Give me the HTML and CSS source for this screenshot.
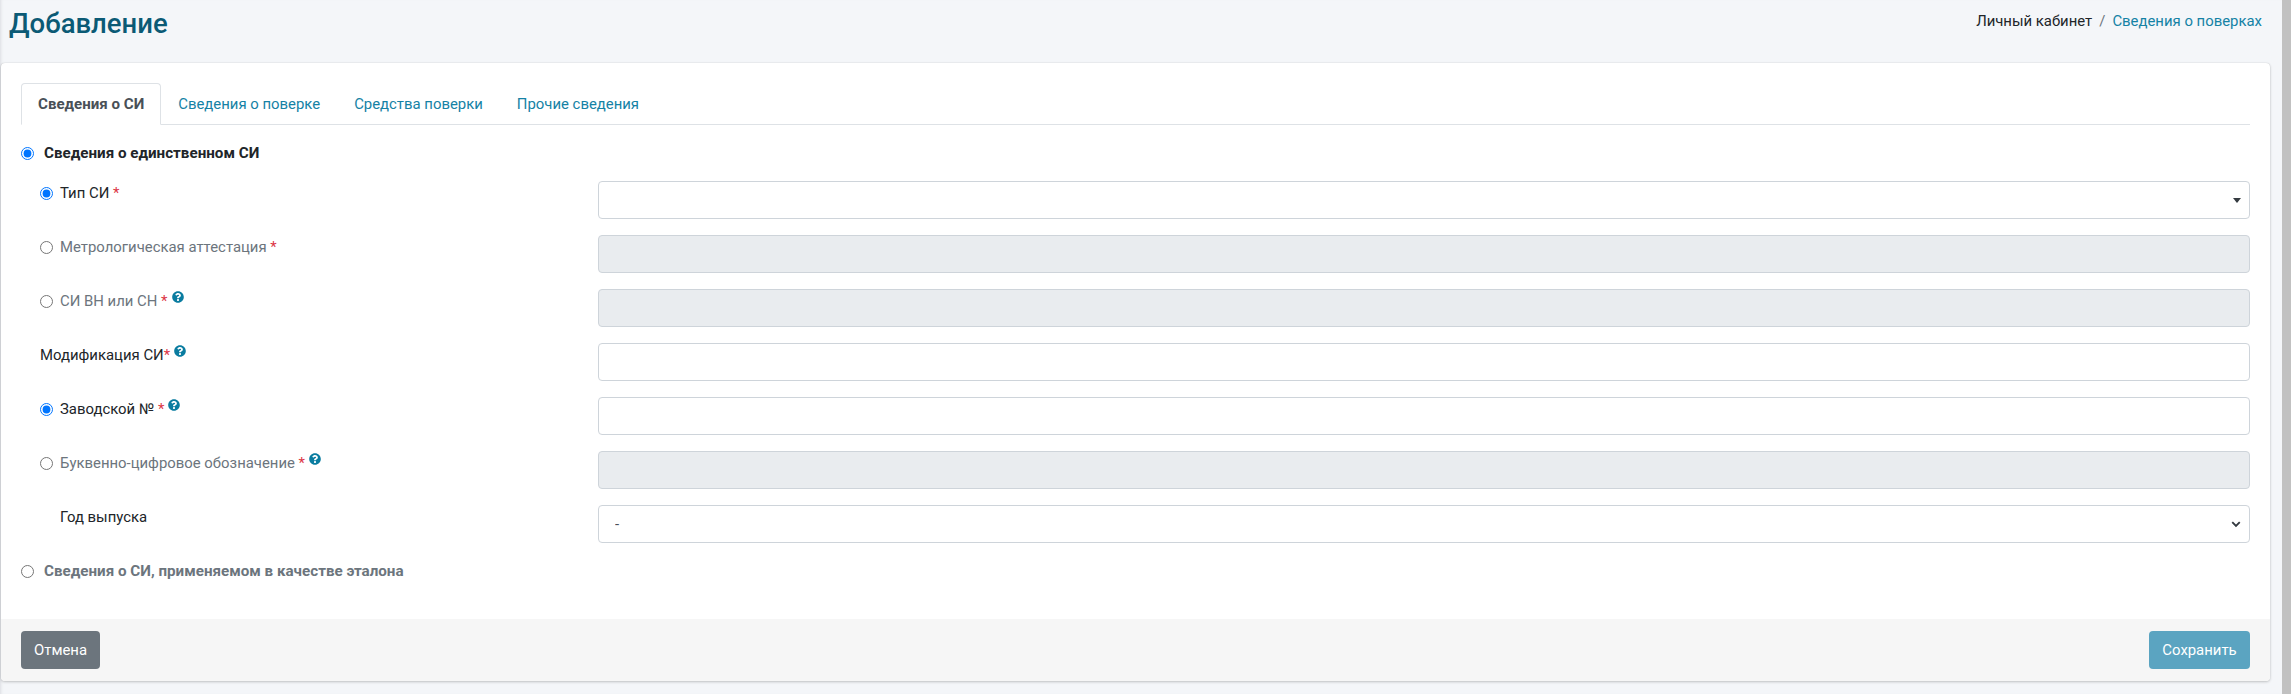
FILE: index.html
```html
<!DOCTYPE html>
<html lang="ru">
<head>
  <meta charset="UTF-8">
  <title>Добавление</title>
  <link rel="stylesheet" href="styles.css">
</head>
<body>
  <svg class="icon-defs" width="0" height="0">
    <symbol id="help" viewBox="0 0 512 512">
      <path d="M504 256c0 136.997-111.043 248-248 248S8 392.997 8 256C8 119.083 119.043 8 256 8s248 111.083 248 248zM262.655 90c-54.497 0-89.255 22.957-116.549 63.758-3.536 5.286-2.353 12.415 2.715 16.258l34.699 26.31c5.205 3.947 12.621 3.008 16.665-2.122 17.864-22.658 30.113-35.797 57.303-35.797 20.429 0 45.698 13.148 45.698 32.958 0 14.976-12.363 22.667-32.534 33.976C247.128 238.528 216 254.941 216 296v4c0 6.627 5.373 12 12 12h56c6.627 0 12-5.373 12-12v-1.333c0-28.462 83.186-29.647 83.186-106.667 0-58.002-60.165-102-116.531-102zM256 338c-25.365 0-46 20.635-46 46 0 25.364 20.635 46 46 46s46-20.636 46-46c0-25.365-20.635-46-46-46z"/>
    </symbol>
  </svg>

  <div class="page">
    <main class="content">
      <header class="page-header">
        <h1>Добавление</h1>
        <nav class="breadcrumb">
          <span>Личный кабинет</span>
          <span class="sep">/</span>
          <a href="#">Сведения о поверках</a>
        </nav>
      </header>

      <form class="card">
        <div class="card-body">
          <ul class="tabs">
            <li class="active"><a href="#">Сведения о СИ</a></li>
            <li><a href="#">Сведения о поверке</a></li>
            <li><a href="#">Средства поверки</a></li>
            <li><a href="#">Прочие сведения</a></li>
          </ul>

          <label class="section-radio">
            <input type="radio" name="section" checked>
            <span>Сведения о единственном СИ</span>
          </label>

          <div class="rows">
            <div class="row">
              <label class="row-label"><input type="radio" name="kind" checked><span>Тип СИ <i>*</i></span></label>
              <div class="fake-select"><b class="caret"></b></div>
            </div>
            <div class="row">
              <label class="row-label muted"><input type="radio" name="kind"><span>Метрологическая аттестация <i>*</i></span></label>
              <input class="field" type="text" disabled>
            </div>
            <div class="row">
              <label class="row-label muted"><input type="radio" name="kind"><span>СИ ВН или СН <i>*</i></span><svg class="help"><use href="#help"/></svg></label>
              <input class="field" type="text" disabled>
            </div>
            <div class="row">
              <label class="row-label"><span>Модификация СИ<i>*</i></span><svg class="help"><use href="#help"/></svg></label>
              <input class="field" type="text">
            </div>
            <div class="row">
              <label class="row-label"><input type="radio" name="serial" checked><span>Заводской № <i>*</i></span><svg class="help"><use href="#help"/></svg></label>
              <input class="field" type="text">
            </div>
            <div class="row">
              <label class="row-label muted"><input type="radio" name="serial"><span>Буквенно-цифровое обозначение <i>*</i></span><svg class="help"><use href="#help"/></svg></label>
              <input class="field" type="text" disabled>
            </div>
            <div class="row">
              <label class="row-label indented"><span>Год выпуска</span></label>
              <select class="field year"><option>-</option></select>
            </div>
          </div>

          <label class="section-radio muted">
            <input type="radio" name="section">
            <span>Сведения о СИ, применяемом в качестве эталона</span>
          </label>
        </div>

        <footer class="card-footer">
          <button type="button" class="btn btn-cancel">Отмена</button>
          <button type="button" class="btn btn-save">Сохранить</button>
        </footer>
      </form>
    </main>
    <div class="scrollbar"></div>
  </div>
</body>
</html>
```

FILE: styles.css
```css
* {
  box-sizing: border-box;
}

html, body {
  height: 100%;
}

body {
  margin: 0;
  background: #f4f6f9;
  color: #212529;
  font-family: "Roboto", "Noto Sans", sans-serif;
  font-size: 14.9px;
  overflow: hidden;
}

.icon-defs {
  display: block;
  height: 0;
}

.page {
  display: flex;
  height: 694px;
}

.content {
  flex: 1;
  padding: 0 12px 0 1px;
  box-shadow: inset 3px 0 3px -2px #dcdee2;
}

.scrollbar {
  width: 9px;
  background: #c1c1c1;
}

.page-header {
  display: flex;
  justify-content: space-between;
  height: 63px;
  padding: 0 8px;
}

.page-header h1 {
  margin: 7px 0 0;
  color: #0b5a75;
  font-size: 27.5px;
  line-height: 34px;
  font-weight: 500;
}

.breadcrumb {
  display: flex;
  gap: 7px;
  padding-top: 11px;
  line-height: 20px;
}

.breadcrumb .sep {
  color: #6c757d;
}

a {
  color: #1582a5;
  text-decoration: none;
}

.card {
  background: #fff;
  border-radius: 4px;
  box-shadow: 0 0 1px rgba(0, 0, 0, .2), 0 1px 3px rgba(0, 0, 0, .2);
}

.card-body {
  padding: 20px 20px 0;
  height: 556px;
}

.tabs {
  display: flex;
  list-style: none;
  margin: 0;
  padding: 0;
  height: 42px;
  border-bottom: 1px solid #dee2e6;
}

.tabs a {
  display: block;
  height: 42px;
  padding: 10px 16px;
  line-height: 20px;
  border: 1px solid transparent;
  border-radius: 4px 4px 0 0;
}

.tabs .active a {
  color: #495057;
  font-weight: 700;
  font-size: 15.1px;
  background: #fff;
  border-color: #dee2e6 #dee2e6 #fff;
}

.section-radio {
  display: flex;
  align-items: center;
  gap: 10px;
  height: 20px;
  font-size: 15.2px;
  font-weight: 700;
  margin-top: 18px;
}

.section-radio.muted {
  margin-top: 18px;
}

.muted {
  color: #6c757d;
}

input[type="radio"] {
  width: 13px;
  height: 13px;
  margin: 0;
  flex: none;
}

.rows {
  display: flex;
  flex-direction: column;
  gap: 16px;
  padding: 18px 0 0 19px;
}

.row {
  display: grid;
  grid-template-columns: 558px 1fr;
  height: 38px;
}

.row-label {
  display: flex;
  align-items: center;
  align-self: start;
  gap: 7px;
  height: 24px;
}

.row-label i {
  color: #dc3545;
  font-style: normal;
}

.indented {
  padding-left: 20px;
}

.help {
  width: 12px;
  height: 12px;
  margin: -8px 0 0 -3px;
  fill: #0a7ca0;
}

.field, .fake-select {
  width: 100%;
  height: 38px;
  padding: 6px 12px;
  background: #fff;
  border: 1px solid #ced4da;
  border-radius: 4px;
  font: inherit;
  color: #495057;
}

.field:disabled {
  background: #e9ecef;
}

.fake-select {
  display: flex;
  align-items: center;
  justify-content: flex-end;
  padding-right: 8px;
}

.caret {
  width: 0;
  height: 0;
  border: 4px solid transparent;
  border-top: 5px solid #343a40;
  border-bottom: 0;
}

.year {
  appearance: none;
  padding-left: 16px;
  background: #fff url("data:image/svg+xml,%3csvg xmlns='http://www.w3.org/2000/svg' viewBox='0 0 16 16'%3e%3cpath fill='none' stroke='%23343a40' stroke-width='3' d='m2 5 6 6 6-6'/%3e%3c/svg%3e") no-repeat right 8px center / 10px 10px;
}

.card-footer {
  display: flex;
  justify-content: space-between;
  height: 62px;
  padding: 12px 20px;
  background: #f6f6f6;
  border-radius: 0 0 4px 4px;
}

.btn {
  height: 38px;
  padding: 0 12px;
  border: 1px solid transparent;
  border-radius: 4px;
  color: #fff;
  font: inherit;
}

.btn-cancel {
  background: #6c757d;
}

.btn-save {
  background: #5ba4c1;
  width: 101px;
}
```
